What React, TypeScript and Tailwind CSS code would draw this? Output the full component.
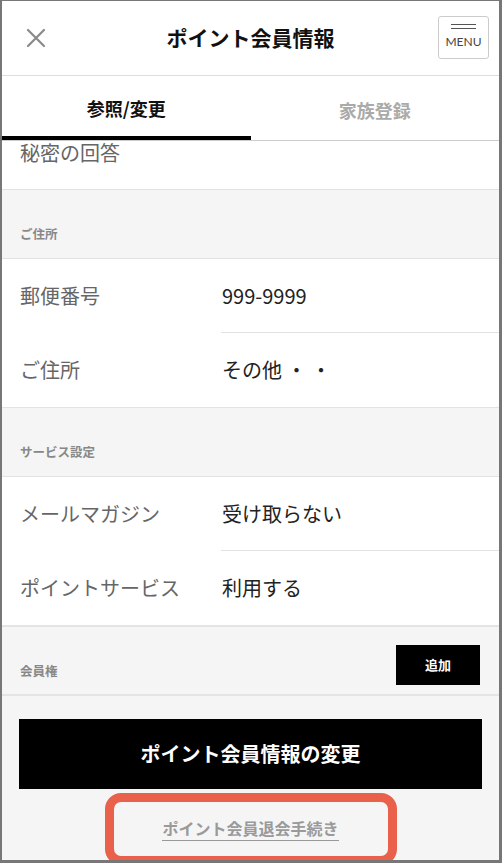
import React from "react";

const font = { fontFamily: '"Noto Sans CJK JP", "Noto Sans", sans-serif' };

function Row({ label, value, last }: { label: string; value: string; last?: boolean }) {
  return (
    <div className="relative flex h-[74px] items-center bg-white">
      <span className="w-[220px] pl-[18px] text-[20px] text-[#666]">{label}</span>
      <span className="text-[20px] text-[#222]">{value}</span>
      {!last && <div className="absolute bottom-0 left-[219px] right-0 h-px bg-[#e2e2e2]" />}
    </div>
  );
}

function SectionHead({ title }: { title: string }) {
  return (
    <div className="flex h-[70px] items-end border-y border-[#e2e2e2] bg-[#f5f5f5] pb-[14px] pl-[18px]">
      <span className="text-[12.5px] font-bold text-[#888]">{title}</span>
    </div>
  );
}

export default function App() {
  return (
    <div
      style={font}
      className="relative h-[863px] w-[502px] overflow-hidden border-b-[3px] border-l-2 border-r-[3px] border-t border-[#777] bg-[#f5f5f5]"
    >
      {/* header */}
      <header className="relative flex h-[75px] items-center justify-center border-b border-[#ddd] bg-white">
        <svg className="absolute left-[24px] top-[27px]" width="20" height="20" viewBox="0 0 20 20">
          <path d="M2 2 L18 18 M18 2 L2 18" stroke="#8a8a8a" strokeWidth="2.2" strokeLinecap="round" />
        </svg>
        <h1 className="text-[21px] font-bold text-[#111]">ポイント会員情報</h1>
        <button className="absolute right-[10px] top-[15px] flex h-[43px] w-[51px] flex-col items-center rounded-[3px] border border-[#ccc] bg-white pt-[7px]">
          <span className="h-px w-[25px] bg-[#555]" />
          <span className="mt-[3px] h-px w-[25px] bg-[#555]" />
          <span className="mt-[7px] font-['Lato'] text-[12px] leading-none text-[#444]">MENU</span>
        </button>
      </header>

      {/* tabs */}
      <nav className="grid h-[65px] grid-cols-2 border-b border-[#ccc] bg-white">
        <div className="flex items-center justify-center border-b-4 border-black pt-[4px] text-[18px] font-bold text-[#111]">
          参照/変更
        </div>
        <div className="flex items-center justify-center pt-[4px] text-[18px] font-bold text-[#aaa]">家族登録</div>
      </nav>

      <div className="h-[48px] bg-white pl-[18px]">
        <span className="block text-[20px] leading-[24px] text-[#666]">秘密の回答</span>
      </div>

      <SectionHead title="ご住所" />
      <Row label="郵便番号" value="999-9999" />
      <Row label="ご住所" value="その他 ・ ・" last />

      <SectionHead title="サービス設定" />
      <Row label="メールマガジン" value="受け取らない" />
      <Row label="ポイントサービス" value="利用する" last />

      <div className="flex h-[71px] items-start justify-between border-y-2 border-[#e4e4e4] bg-[#f5f5f5] pl-[18px] pr-[19px]">
        <span className="mt-[35px] text-[12.5px] font-bold leading-[18px] text-[#888]">会員権</span>
        <button className="mt-[18px] h-[40px] w-[84px] bg-black text-[13px] font-bold text-white">追加</button>
      </div>

      <div className="px-[17px] pt-[23px]">
        <button className="flex h-[70px] w-full items-center justify-center bg-black text-[20px] font-bold text-white">
          ポイント会員情報の変更
        </button>
        <div className="flex justify-center pt-[29px]">
          <a className="border-b border-[#999] pb-[2px] text-[16px] font-bold leading-[20px] text-[#9a9a9a]">
            ポイント会員退会手続き
          </a>
        </div>
      </div>

      {/* annotation */}
      <div className="absolute left-[103px] top-[792px] h-[72px] w-[292px] rounded-[16px] border-[9px] border-[#e9604b]" />
    </div>
  );
}
